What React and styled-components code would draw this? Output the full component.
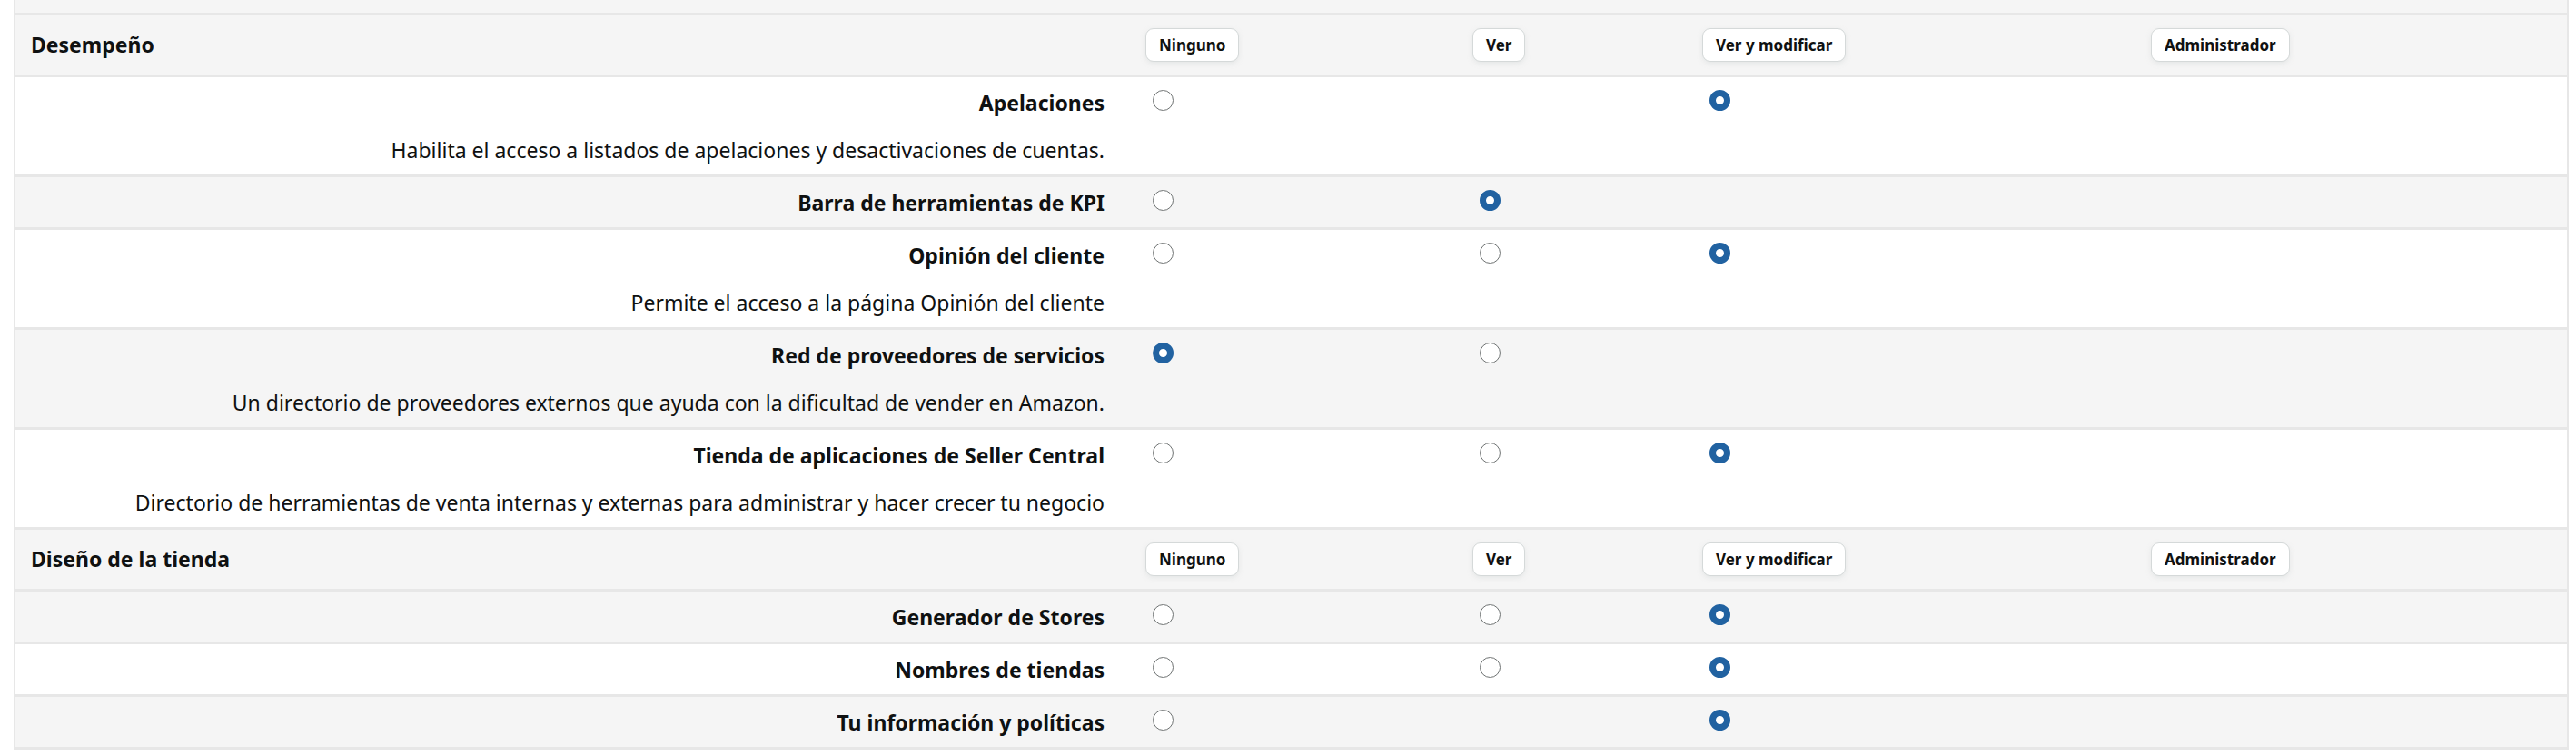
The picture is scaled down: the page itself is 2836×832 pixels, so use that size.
import React from 'react';
import styled, { createGlobalStyle } from 'styled-components';

const Global = createGlobalStyle`
  body { margin: 0; background: #fff; font-family: "Noto Sans", "Open Sans", Arial, sans-serif; color: #0f1111; }
`;

const Table = styled.div`
  margin: 0 8px 0 15px;
  border-left: 2px solid #e7e7e7;
  border-right: 2px solid #e7e7e7;
`;

const Row = styled.div`
  display: grid;
  grid-template-columns: 1244px 360px 253px 494px 1fr;
  background: ${p => (p.$gray ? '#f5f5f5' : '#fff')};
  border-bottom: 3px solid #e7e7e7;
  padding: ${p => (p.$header ? '14px 0 14px' : '10px 0 9px')};
  align-items: start;
`;

const Top = styled.div`
  height: 14px;
  background: #f5f5f5;
  border-bottom: 3px solid #e7e7e7;
`;

const LabelCell = styled.div`
  text-align: right;
  padding-right: 45px;
`;

const Title = styled.div`
  font-size: 23px;
  font-weight: 700;
  line-height: 36px;
  text-align: ${p => (p.$left ? 'left' : 'right')};
  padding-left: ${p => (p.$left ? '17px' : '0')};
`;

const Desc = styled.div`
  font-size: 23px;
  line-height: 36px;
  margin-top: 16px;
`;

const Cell = styled.div`
  height: ${p => (p.$button ? '37px' : '36px')};
  display: flex;
  align-items: center;
  padding-left: ${p => (p.$button ? '0' : '8px')};
`;

const Button = styled.div`
  height: 35px;
  padding: 0 14px;
  display: flex;
  align-items: center;
  background: #fff;
  border: 1px solid #d5d9d9;
  border-radius: 9px;
  box-shadow: 0 2px 5px rgba(213, 217, 217, 0.5);
  font-size: 17px;
  font-weight: 700;
`;

const Radio = styled.span`
  box-sizing: border-box;
  width: 23px;
  height: 23px;
  border-radius: 50%;
  background: #fff;
  border: ${p => (p.$on ? '7px solid #2162a1' : '1.5px solid #6f7373')};
  margin-top: -6px;
`;

const levels = ['Ninguno', 'Ver', 'Ver y modificar', 'Administrador'];

const sections = [
  {
    name: 'Desempeño',
    rows: [
      { t: 'Apelaciones', d: 'Habilita el acceso a listados de apelaciones y desactivaciones de cuentas.', r: [0, null, 1, null] },
      { t: 'Barra de herramientas de KPI', r: [0, 1, null, null] },
      { t: 'Opinión del cliente', d: 'Permite el acceso a la página Opinión del cliente', r: [0, 0, 1, null] },
      { t: 'Red de proveedores de servicios', d: 'Un directorio de proveedores externos que ayuda con la dificultad de vender en Amazon.', r: [1, 0, null, null] },
      { t: 'Tienda de aplicaciones de Seller Central', d: 'Directorio de herramientas de venta internas y externas para administrar y hacer crecer tu negocio', r: [0, 0, 1, null] },
    ],
  },
  {
    name: 'Diseño de la tienda',
    rows: [
      { t: 'Generador de Stores', r: [0, 0, 1, null], gray: true },
      { t: 'Nombres de tiendas', r: [0, 0, 1, null] },
      { t: 'Tu información y políticas', r: [0, null, 1, null], gray: true },
    ],
  },
];

export default function App() {
  return (
    <>
      <Global />
      <Table>
        <Top />
        {sections.map((s, si) => (
          <React.Fragment key={s.name}>
            <Row $gray $header>
              <Title $left>{s.name}</Title>
              {levels.map(l => (
                <Cell key={l} $button><Button>{l}</Button></Cell>
              ))}
            </Row>
            {s.rows.map((r, i) => (
              <Row key={r.t} $gray={r.gray !== undefined ? r.gray : si === 0 && i % 2 === 1}>
                <LabelCell>
                  <Title>{r.t}</Title>
                  {r.d && <Desc>{r.d}</Desc>}
                </LabelCell>
                {r.r.map((v, k) => (
                  <Cell key={k}>{v !== null && <Radio $on={v === 1} />}</Cell>
                ))}
              </Row>
            ))}
          </React.Fragment>
        ))}
      </Table>
    </>
  );
}
